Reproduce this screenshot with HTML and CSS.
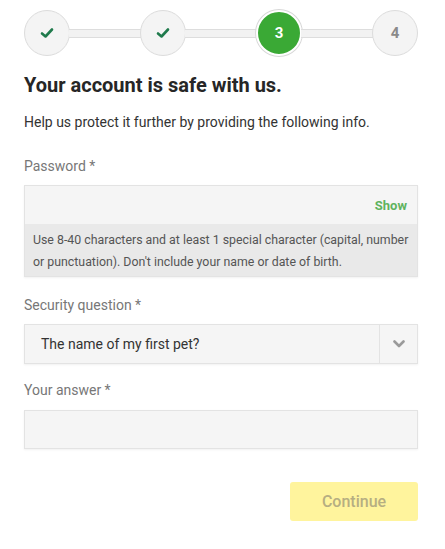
FILE: index.html
```html
<!DOCTYPE html>
<html>
<head>
<meta charset="utf-8">
<link rel="stylesheet" href="styles.css">
</head>
<body>
<div class="page">
  <div class="stepper">
    <div class="step done">
      <svg width="14" height="12" viewBox="0 0 14 12"><path d="M2 6.5 L5.5 9.5 L12 2.5" fill="none" stroke="#1f7a4c" stroke-width="2.6" stroke-linecap="round" stroke-linejoin="round"/></svg>
    </div>
    <div class="bar"></div>
    <div class="step done">
      <svg width="14" height="12" viewBox="0 0 14 12"><path d="M2 6.5 L5.5 9.5 L12 2.5" fill="none" stroke="#1f7a4c" stroke-width="2.6" stroke-linecap="round" stroke-linejoin="round"/></svg>
    </div>
    <div class="bar"></div>
    <div class="step active">3</div>
    <div class="bar"></div>
    <div class="step todo">4</div>
  </div>

  <h1 class="title">Your account is safe with us.</h1>
  <p class="intro">Help us protect it further by providing the following info.</p>

  <div class="label first">Password *</div>
  <div class="pwbox">
    <div class="pwfield"><span class="show">Show</span></div>
    <div class="hint">Use 8-40 characters and at least 1 special character (capital, number or punctuation). Don't include your name or date of birth.</div>
  </div>

  <div class="label">Security question *</div>
  <div class="select">
    <div class="select-value">The name of my first pet?</div>
    <div class="select-arrow">
      <svg width="12" height="8" viewBox="0 0 12 8"><path d="M1.5 1.5 L6 6 L10.5 1.5" fill="none" stroke="#9a9a9a" stroke-width="2.6" stroke-linecap="round" stroke-linejoin="round"/></svg>
    </div>
  </div>

  <div class="label answer">Your answer *</div>
  <div class="input"></div>

  <div class="actions">
    <button class="continue">Continue</button>
  </div>
</div>
</body>
</html>
```

FILE: styles.css
```css
html, body {
  margin: 0;
  padding: 0;
  background: #ffffff;
}
body {
  font-family: Roboto, "Liberation Sans", Arial, sans-serif;
  color: #333;
}
.page {
  padding: 10px 27px 0 24px;
}
.stepper {
  display: flex;
  align-items: center;
  height: 46px;
}
.step {
  width: 46px;
  height: 46px;
  box-sizing: border-box;
  border-radius: 50%;
  display: flex;
  align-items: center;
  justify-content: center;
  flex: none;
  font-weight: 700;
  font-size: 15px;
}
.step.done, .step.todo {
  background: #f4f4f4;
  border: 1px solid #dcdcdc;
}
.step.todo {
  color: #8a8a8a;
}
.step.active {
  background: #3aa935;
  color: #fff;
  border: 2px solid #fff;
  box-shadow: 0 0 0 1px #d8d8d8;
}
.bar {
  flex: 1;
  height: 9px;
  box-sizing: border-box;
  background: #f2f2f2;
  border-top: 1px solid #dddddd;
  border-bottom: 1px solid #dddddd;
  margin: 0 -1px;
}
.title {
  margin: 17px 0 0;
  font-size: 20px;
  line-height: 24px;
  font-weight: 700;
  color: #262626;
}
.intro {
  margin: 15px 0 0;
  font-size: 14px;
  line-height: 20px;
  color: #333;
}
.label {
  margin-top: 18px;
  font-size: 14px;
  line-height: 20px;
  color: #777;
}
.label.first {
  margin-top: 24px;
}
.label.answer {
  margin-top: 16px;
}
.pwbox {
  margin-top: 9px;
  border: 1px solid #e3e3e3;
  box-shadow: 0 1px 2px rgba(0,0,0,0.06);
}
.pwfield {
  height: 38px;
  background: #f5f5f5;
  display: flex;
  align-items: center;
  justify-content: flex-end;
  padding-right: 10px;
}
.show {
  color: #5fb35e;
  font-size: 13px;
  font-weight: 700;
}
.hint {
  background: #e9e9e9;
  font-size: 12.35px;
  line-height: 21.5px;
  color: #555;
  padding: 6px 8px 3px 8px;
}
.select {
  margin-top: 9px;
  height: 40px;
  box-sizing: border-box;
  border: 1px solid #e3e3e3;
  background: #f5f5f5;
  display: flex;
  box-shadow: 0 1px 2px rgba(0,0,0,0.06);
}
.select-value {
  flex: 1;
  display: flex;
  align-items: center;
  padding-left: 16px;
  font-size: 14px;
  color: #333;
}
.select-arrow {
  width: 37px;
  border-left: 1px solid #e3e3e3;
  display: flex;
  align-items: center;
  justify-content: center;
}
.input {
  margin-top: 10px;
  height: 39px;
  box-sizing: border-box;
  border: 1px solid #e3e3e3;
  background: #f5f5f5;
  box-shadow: 0 1px 2px rgba(0,0,0,0.06);
}
.actions {
  display: flex;
  justify-content: flex-end;
  margin-top: 33px;
}
.continue {
  width: 128px;
  height: 39px;
  border: none;
  border-radius: 3px;
  background: #fff49d;
  color: #b6ae82;
  font-family: Roboto, "Liberation Sans", Arial, sans-serif;
  font-size: 16px;
  font-weight: 500;
  padding: 0;
}
```
